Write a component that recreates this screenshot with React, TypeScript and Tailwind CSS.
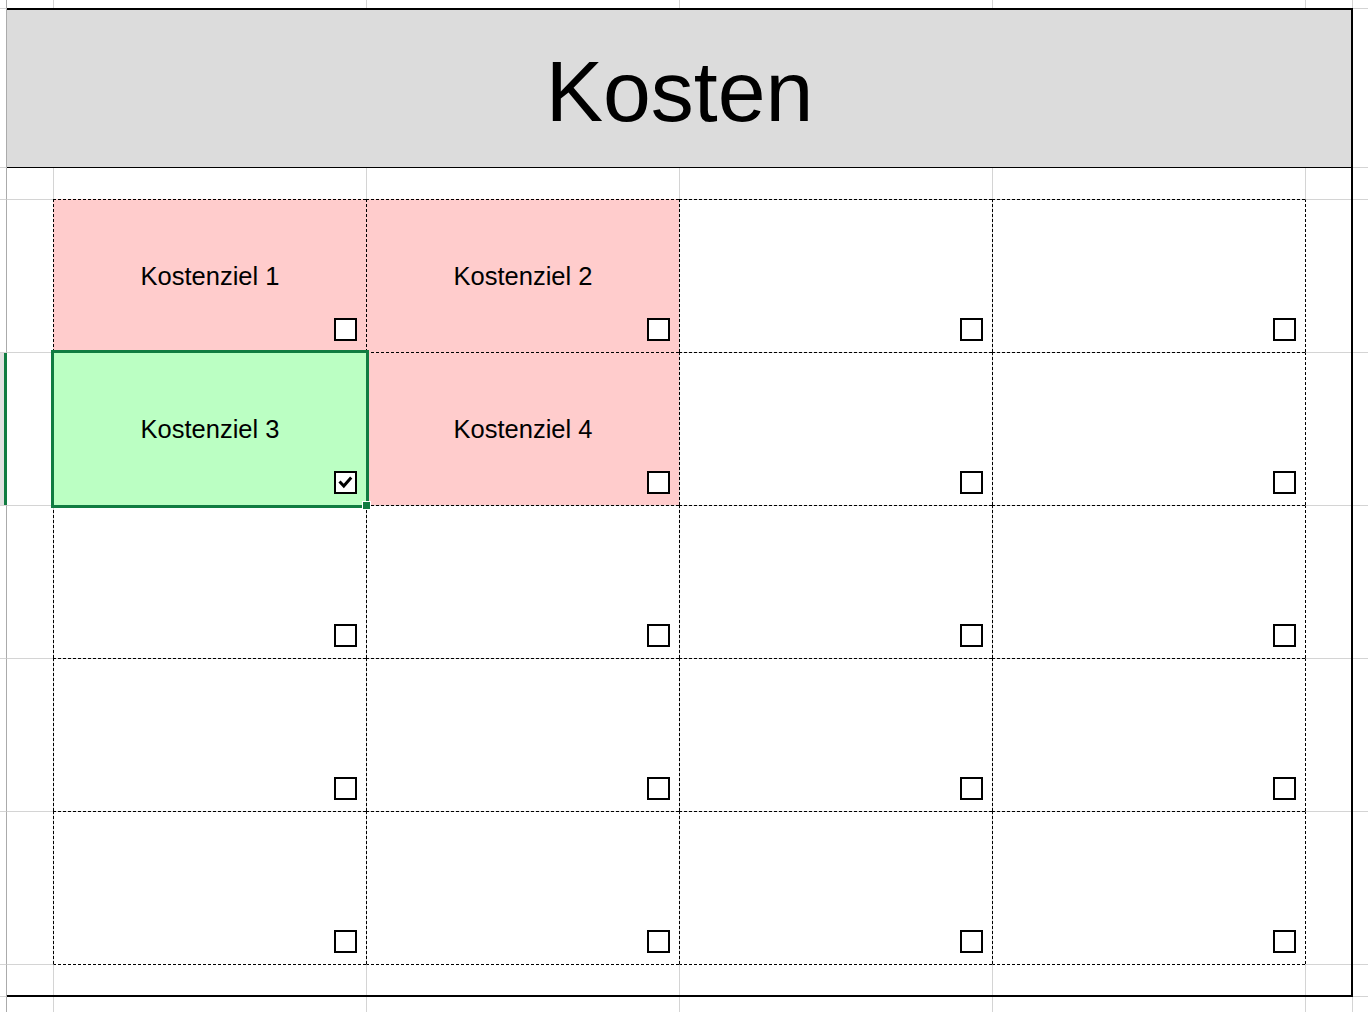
import React from "react";

const ROWS = 10;
const COLS = 8;

type Cell = {
  label?: string;
  bg?: string;
  checked?: boolean;
  selected?: boolean;
};

const cells: Cell[] = [
  { label: "Kostenziel 1", bg: "bg-[#ffcccc]" },
  { label: "Kostenziel 2", bg: "bg-[#ffcccc]" },
  {},
  {},
  { label: "Kostenziel 3", bg: "bg-[#bbffc3]", checked: true, selected: true },
  { label: "Kostenziel 4", bg: "bg-[#ffcccc]" },
  {},
  {},
  {},
  {},
  {},
  {},
  {},
  {},
  {},
  {},
  {},
  {},
  {},
  {},
];

const gridTemplate =
  "grid grid-cols-[6px_47px_313px_313px_313px_313px_47px_16px] grid-rows-[8px_159px_32px_153px_153px_153px_153px_153px_32px_16px]";

const gridLineClass = (r: number, c: number) => {
  let top = "";
  if (r > 0) {
    top =
      r === 8 && c >= 2 && c <= 5
        ? "border-t border-t-black [border-top-style:dashed]"
        : "border-t border-t-[#d4d4d4]";
  }
  let left = "";
  if (c === 1) {
    left = "border-l border-l-[#ababab]";
  } else if (c > 1) {
    left =
      c === 6 && r >= 3 && r <= 7
        ? "border-l border-l-black [border-left-style:dashed]"
        : "border-l border-l-[#d4d4d4]";
  }
  return `${top} ${left}`;
};

const CheckBox = ({ checked }: { checked?: boolean }) => (
  <div className="[grid-area:1/1] self-end justify-self-end mr-[9px] mb-[11px] w-[23px] h-[23px] border-2 border-black bg-white">
    {checked && (
      <svg width="19" height="19" viewBox="0 0 19 19">
        <path
          d="M3.5 8.5 L7.8 13 L15.2 4.5"
          fill="none"
          stroke="black"
          strokeWidth="3"
        />
      </svg>
    )}
  </div>
);

const TableCell = ({ cell }: { cell: Cell }) => (
  <div
    className={`grid border-l border-t border-dashed border-black ${
      cell.bg ?? "bg-transparent"
    } ${cell.selected ? "relative" : ""}`}
  >
    {cell.label && (
      <span className="[grid-area:1/1] place-self-center text-[25.5px] text-black">
        {cell.label}
      </span>
    )}
    <CheckBox checked={cell.checked} />
    {cell.selected && (
      <>
        <div className="absolute -inset-[3px] border-[3px] border-[#107c41] pointer-events-none z-10" />
        <div className="absolute -right-[5px] -bottom-[5px] w-[9px] h-[9px] bg-[#107c41] border border-white z-10" />
      </>
    )}
  </div>
);

export default function App() {
  return (
    <div className="w-[1368px] h-[1012px] bg-white overflow-hidden grid font-['Liberation_Sans',Arial,sans-serif]">
      {/* sheet gridlines */}
      <div className={`[grid-area:1/1] ${gridTemplate}`}>
        {Array.from({ length: ROWS }).map((_, r) =>
          Array.from({ length: COLS }).map((_, c) => (
            <div key={`${r}-${c}`} className={gridLineClass(r, c)} />
          ))
        )}
      </div>

      {/* content */}
      <div className={`[grid-area:1/1] ${gridTemplate}`}>
        <div className="col-start-1 row-start-5 mt-px -mr-px bg-[#e1e1e1] border-r-[3px] border-[#107c41]" />

        <div className="col-start-2 col-end-8 row-start-2 ml-px -mb-px pt-[6px] flex items-center justify-center bg-[#dcdcdc] border-b border-black">
          <h1 className="text-[86px] leading-none text-black">Kosten</h1>
        </div>

        <div className="col-start-3 col-end-7 row-start-4 row-end-9 grid grid-cols-4 grid-rows-5">
          {cells.map((cell, i) => (
            <TableCell key={i} cell={cell} />
          ))}
        </div>

        <div className="col-start-2 col-end-8 row-start-2 row-end-10 ml-px -mr-px -mb-px border-t-2 border-r-2 border-b-2 border-black pointer-events-none" />
      </div>
    </div>
  );
}
